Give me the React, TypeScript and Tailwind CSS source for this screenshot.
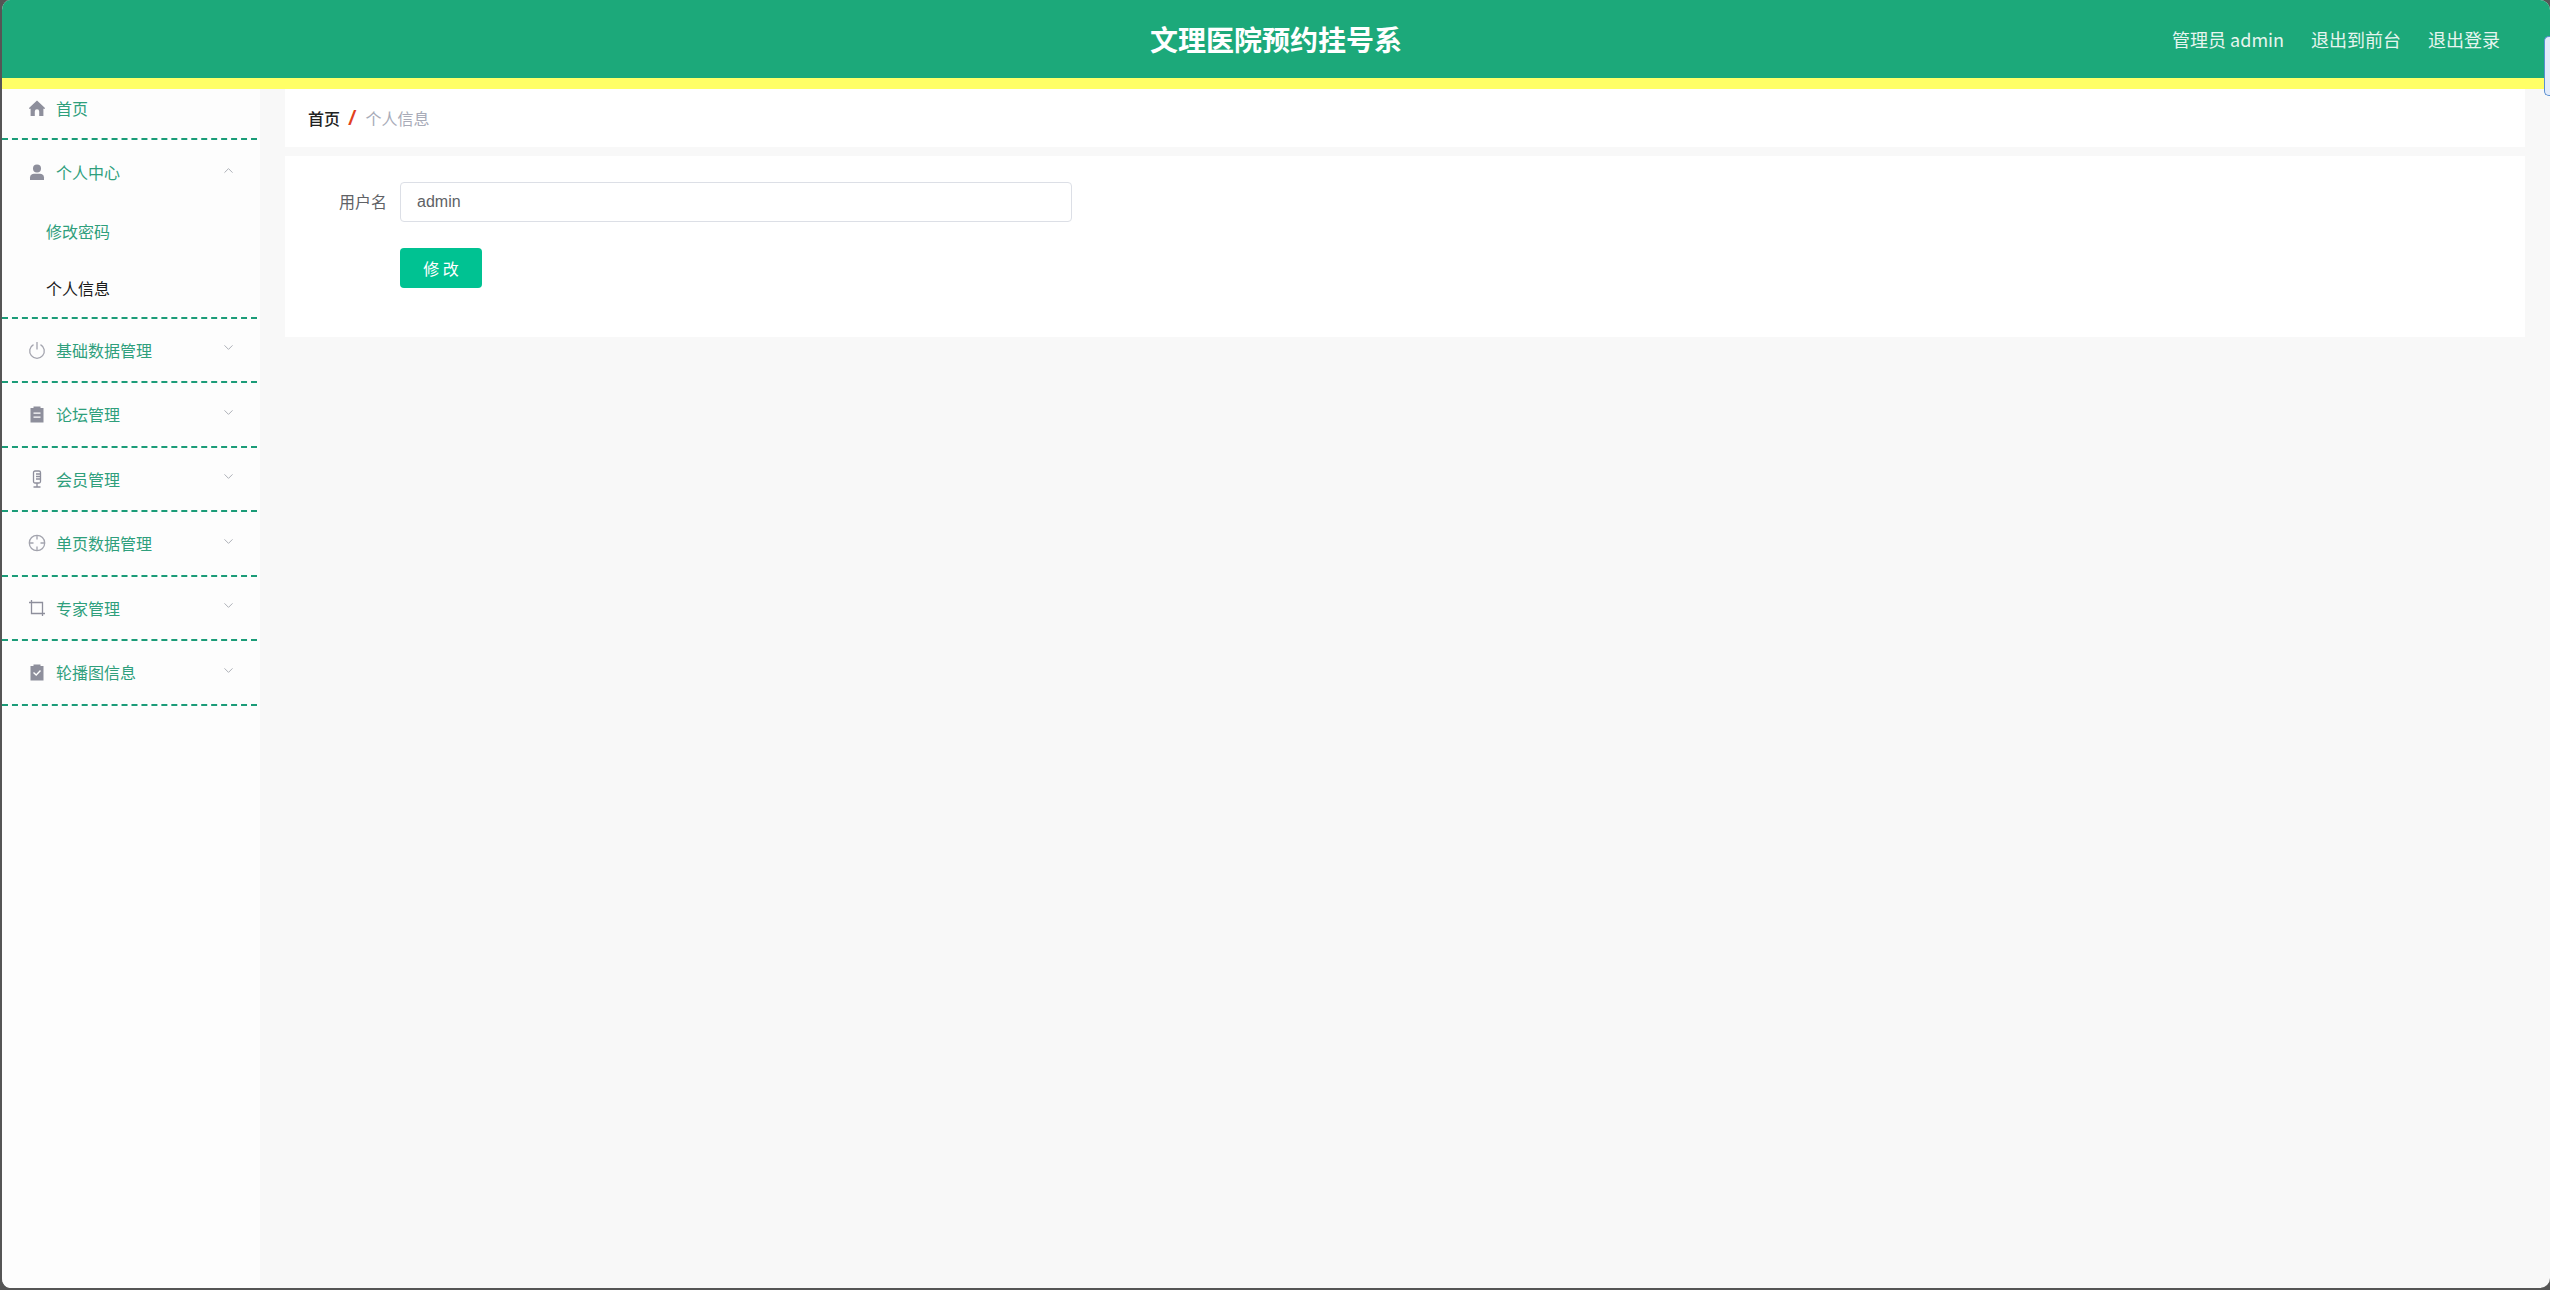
import { ChevronDown, ChevronUp } from "lucide-react";
import type { ReactNode } from "react";

const FONT = "font-['Microsoft_YaHei','Noto_Sans_CJK_SC','Liberation_Sans',sans-serif]";

const HomeIcon = () => (
  <svg viewBox="0 0 18 18" className="h-[18px] w-[18px]" fill="#8e8f9c">
    <path d="M9 1.500 17 9v.8h-1.600V17h-4.200v-4.600a2.200 2.200 0 0 0-4.400 0V17H2.600V9.800H1V9z" />
  </svg>
);

const UserIcon = () => (
  <svg viewBox="0 0 18 18" className="h-[18px] w-[18px]" fill="#8e8f9c">
    <circle cx="9" cy="5.500" r="4" />
    <path d="M2 17v-2.500C2 12 4 10.800 6 10.800h6c2 0 4 1.200 4 3.700V17z" />
  </svg>
);

const PowerIcon = () => (
  <svg viewBox="0 0 18 18" className="h-[18px] w-[18px]" fill="none" stroke="#a3a4ae" strokeWidth="1.300">
    <path d="M5.500 3.600a7.300 7.300 0 1 0 7 0" />
    <path d="M9 1v7.500" />
  </svg>
);

const OrderIcon = () => (
  <svg viewBox="0 0 18 18" className="h-[18px] w-[18px]">
    <path fill="#8e8f9c" d="M2.500 3h3V1.500h7V3h3v14.500h-13z" />
    <path fill="#fff" d="M5.500 7.500h7v1.200h-7zM5.500 11.500h7v1.200h-7z" />
  </svg>
);

const MicIcon = () => (
  <svg viewBox="0 0 18 18" className="h-[18px] w-[18px]" fill="none" stroke="#8e8f9c" strokeWidth="1.300">
    <rect x="5.500" y="1" width="7" height="12" rx="1.500" />
    <path d="M9 13v4M5.500 17h7M8 4h4.500M8 6.500h4.500M8 9h4.500" />
  </svg>
);

const AimIcon = () => (
  <svg viewBox="0 0 18 18" className="h-[18px] w-[18px]" fill="none" stroke="#a3a4ae" strokeWidth="1.300">
    <circle cx="9" cy="9" r="7.700" />
    <path d="M9 1.300v4.200M9 12.500v4.200M1.300 9h4.200M12.500 9h4.200" />
  </svg>
);

const CropIcon = () => (
  <svg viewBox="0 0 18 18" className="h-[18px] w-[18px]" fill="none" stroke="#8e8f9c" strokeWidth="1.300">
    <path d="M1 3.500h13.500V17M3.500 1v13.500H17" />
  </svg>
);

const ClaimIcon = () => (
  <svg viewBox="0 0 18 18" className="h-[18px] w-[18px]">
    <path fill="#8e8f9c" d="M2.500 3h3V1.500h7V3h3v14.500h-13z" />
    <path fill="none" stroke="#fff" strokeWidth="1.400" d="m5.500 9.500 2.700 2.500 4.300-4.500" />
  </svg>
);

interface MenuItem {
  label: string;
  icon: ReactNode;
}

const collapsedMenus: MenuItem[] = [
  { label: "基础数据管理", icon: <PowerIcon /> },
  { label: "论坛管理", icon: <OrderIcon /> },
  { label: "会员管理", icon: <MicIcon /> },
  { label: "单页数据管理", icon: <AimIcon /> },
  { label: "专家管理", icon: <CropIcon /> },
  { label: "轮播图信息", icon: <ClaimIcon /> },
];

function MenuRow({ label, icon, open }: MenuItem & { open?: boolean }) {
  return (
    <div
      className={
        open
          ? "flex h-[64.500px] items-center pl-[26px] pr-[21px]"
          : "flex h-[64.500px] items-center border-b-2 border-dashed border-[#1b9c78] pl-[26px] pr-[21px]"
      }
    >
      <span className="mr-[10px] flex w-[18px] justify-center">{icon}</span>
      <span className="flex-1 text-[16px] text-[#2f9f7c]">{label}</span>
      {open ? (
        <ChevronUp className="mb-[4px] h-[15px] w-[15px] text-[#a8abb2]" strokeWidth={1.500} />
      ) : (
        <ChevronDown className="mb-[4px] h-[15px] w-[15px] text-[#a8abb2]" strokeWidth={1.500} />
      )}
    </div>
  );
}

export default function App() {
  return (
    <div className={`h-[1290px] w-[2550px] overflow-hidden bg-[#555555] ${FONT}`}>
      <div className="relative flex h-[1288px] w-[2550px] flex-col overflow-hidden rounded-[10px] border-l-2 border-[#555555] bg-[#f8f8f8]">
        <header className="flex h-[78px] shrink-0 items-center bg-[#1ca97a] pr-[50px]">
          <div className="flex-1 pl-[1148px] text-[28px] font-bold text-white">文理医院预约挂号系</div>
          <div className="flex items-center gap-[27px] text-[18px] text-[#e6f5ef]">
            <span>管理员 admin</span>
            <span>退出到前台</span>
            <span>退出登录</span>
          </div>
        </header>
        <div className="h-[11px] shrink-0 bg-[#ffff66]" />
        <div className="flex flex-1">
          <aside className="w-[258px] shrink-0 bg-[#fdfdfd] pr-[3px]">
            <div className="flex h-[51px] items-center border-b-2 border-dashed border-[#1b9c78] pb-[12px] pl-[26px]">
              <span className="mr-[10px] flex w-[18px] justify-center">
                <HomeIcon />
              </span>
              <span className="text-[16px] text-[#2f9f7c]">首页</span>
            </div>
            <MenuRow label="个人中心" icon={<UserIcon />} open />
            <div className="border-b-2 border-dashed border-[#1b9c78] pl-[44px] text-[16px]">
              <div className="flex h-[53px] items-center text-[#2f9f7c]">修改密码</div>
              <div className="flex h-[59px] items-center pb-[1px] pt-[2px] text-[#1a1a1a]">个人信息</div>
            </div>
            {collapsedMenus.map((menu) => (
              <MenuRow key={menu.label} label={menu.label} icon={menu.icon} />
            ))}
          </aside>
          <main className="flex-1 pl-[25px] pr-[25px]">
            <div className="flex h-[58px] items-center bg-white pl-[23px] text-[16px]">
              <span className="font-medium text-[#222222]">首页</span>
              <span className="ml-[9px] mr-[11px] font-['Liberation_Sans',sans-serif] text-[20px] font-bold italic leading-none text-[#e2421c]">/</span>
              <span className="text-[#a8abb8]">个人信息</span>
            </div>
            <div className="mt-[9px] h-[181px] bg-white pt-[26px]">
              <div className="flex items-center">
                <label className="w-[115px] pb-[2px] pr-[13px] text-right text-[16px] text-[#606266]">用户名</label>
                <input
                  readOnly
                  value="admin"
                  className="h-[40px] w-[672px] rounded-[4px] border border-[#dcdfe6] bg-white px-[16px] font-['Liberation_Sans',sans-serif] text-[16px] text-[#606266] outline-none"
                />
              </div>
              <button className="ml-[115px] mt-[26px] h-[40px] w-[82px] rounded-[4px] bg-[#00c292] text-[16px] text-white">
                修 改
              </button>
            </div>
          </main>
        </div>
        <div className="absolute right-0 top-[36px] h-[60px] w-[6px] rounded-l-[5px] border border-r-0 border-[#5a8fd0] bg-[#e3ecfa]" />
      </div>
    </div>
  );
}
